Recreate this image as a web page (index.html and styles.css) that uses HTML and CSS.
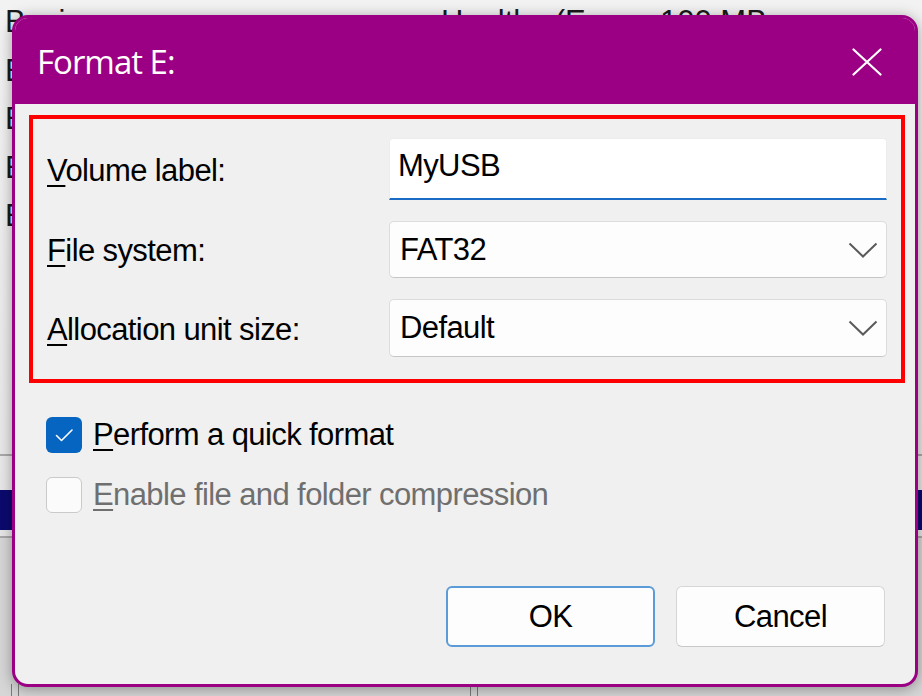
FILE: index.html
```html
<!DOCTYPE html>
<html lang="en">
<head>
<meta charset="utf-8">
<title>Format E:</title>
<link rel="stylesheet" href="styles.css">
</head>
<body>
<div class="screen">
  <div class="bg">
    <div class="bg-list">
      <div class="bg-row head"><span class="c1">Basic</span><span class="c2">Healthy (E</span><span class="c3">100 MB</span></div>
      <div class="bg-row"><span class="c1 clip">E</span></div>
      <div class="bg-row"><span class="c1 clip">E</span></div>
      <div class="bg-row"><span class="c1 clip">E</span></div>
      <div class="bg-row"><span class="c1 clip">E</span></div>
    </div>
    <div class="bg-rule"></div>
    <div class="bg-band"></div>
    <div class="bg-rule second"></div>
    <div class="bg-lower">
      <div class="bg-cell first"></div>
      <div class="bg-cell second"></div>
    </div>
  </div>

  <div class="dialog">
    <div class="titlebar">
      <span class="title">Format E:</span>
      <svg class="close" width="30" height="28" viewBox="0 0 30 28" aria-hidden="true">
        <path d="M1.5 1.5 L28.5 26.5 M28.5 1.5 L1.5 26.5" stroke="#ffffff" stroke-width="2.2" fill="none" stroke-linecap="round"/>
      </svg>
    </div>
    <div class="body">
      <div class="fields">
        <div class="label"><u>V</u>olume label:</div>
        <div class="textbox">MyUSB</div>

        <div class="label"><u>F</u>ile system:</div>
        <div class="select">
          <span>FAT32</span>
          <svg class="chev" width="30" height="16" viewBox="0 0 30 16" aria-hidden="true"><polyline points="1.5,1.5 15,14.5 28.5,1.5" stroke="#5a5a5a" stroke-width="2" fill="none"/></svg>
        </div>

        <div class="label"><u>A</u>llocation unit size:</div>
        <div class="select">
          <span>Default</span>
          <svg class="chev" width="30" height="16" viewBox="0 0 30 16" aria-hidden="true"><polyline points="1.5,1.5 15,14.5 28.5,1.5" stroke="#5a5a5a" stroke-width="2" fill="none"/></svg>
        </div>
      </div>

      <div class="opts">
        <div class="check">
          <span class="box on">
            <svg width="36" height="36" viewBox="0 0 36 36" aria-hidden="true"><polyline points="10.5,18.5 15.5,23.5 26,13" stroke="#ffffff" stroke-width="1.6" fill="none" stroke-linecap="round" stroke-linejoin="round"/></svg>
          </span>
          <span class="ctext"><u>P</u>erform a quick format</span>
        </div>
        <div class="check disabled">
          <span class="box off"></span>
          <span class="ctext"><u>E</u>nable file and folder compression</span>
        </div>
      </div>

      <div class="actions">
        <button class="btn primary">OK</button>
        <button class="btn">Cancel</button>
      </div>
    </div>
  </div>
</div>
</body>
</html>
```

FILE: styles.css
```css
html, body {
  margin: 0;
  padding: 0;
  background: #ececec;
}

.screen {
  position: relative;
  width: 922px;
  height: 696px;
  overflow: hidden;
  font-family: "Liberation Sans", Arial, sans-serif;
}

/* background window (Disk Management) */
.bg {
  display: flex;
  flex-direction: column;
  height: 696px;
  background: linear-gradient(#f2f2f2, #e2e2e2);
  color: #1a1a1a;
  font-size: 31px;
}

.bg-list {
  height: 456px;
  margin-top: -2px;
}

.bg-row {
  display: grid;
  grid-template-columns: 436px 219px auto;
  height: 48.5px;
  line-height: 48px;
  padding-left: 5px;
  white-space: nowrap;
}

.bg-row .clip {
  display: block;
  width: 7px;
  overflow: hidden;
}

.bg-rule {
  height: 2px;
  background: #a8a8a8;
}

.bg-rule.second {
  margin-top: 6px;
}

.bg-band {
  margin-top: 34px;
  height: 40px;
  background: #0b0a6e;
}

.bg-lower {
  flex: 1;
  display: flex;
  align-items: flex-end;
  background: #d6d6d6;
}

.bg-cell {
  height: 12px;
  width: 6px;
  border-left: 1.5px solid #7a7a7a;
  border-right: 1.5px solid #7a7a7a;
}

.bg-cell.first {
  margin-left: 11px;
}

.bg-cell.second {
  margin-left: 451px;
}

/* dialog */
.dialog {
  position: absolute;
  left: 12px;
  top: 15px;
  width: 906px;
  height: 672px;
  box-sizing: border-box;
  border: 3px solid #9b0084;
  border-radius: 16px;
  background: #f0f0f0;
  overflow: hidden;
  display: flex;
  flex-direction: column;
  box-shadow: 0 2px 14px rgba(0, 0, 0, 0.35);
}

.titlebar {
  flex-shrink: 0;
  height: 86px;
  background: #9b0084;
  display: flex;
  align-items: center;
  justify-content: space-between;
  padding: 0 33px 0 22px;
}

.title {
  color: #ffffff;
  font-family: "Open Sans", "Noto Sans", sans-serif;
  font-size: 33px;
  letter-spacing: -1px;
}

.close {
  display: block;
  margin-top: 2px;
}

.body {
  flex: 1;
  display: flex;
  flex-direction: column;
  padding: 11px 10px 0 14px;
  font-size: 31px;
  letter-spacing: -0.6px;
  color: #000;
}

u {
  text-decoration-thickness: 2px;
  text-underline-offset: 4px;
}

.fields {
  border: 4px solid #ff0000;
  padding: 19px 14px 22px 14px;
  display: grid;
  grid-template-columns: 342px 1fr;
  grid-template-rows: 62px 57px 58px;
  row-gap: 21px;
  align-items: center;
}

.label {
  white-space: nowrap;
  padding-top: 3px;
}

.textbox {
  height: 62px;
  box-sizing: border-box;
  background: #ffffff;
  border: 1px solid #ececec;
  border-bottom: 2px solid #1a6bc4;
  border-radius: 4px 4px 0 0;
  padding: 0 0 6px 8px;
  display: flex;
  align-items: center;
}

.select {
  height: 100%;
  box-sizing: border-box;
  background: #fdfdfd;
  border: 1px solid #dcdcdc;
  border-bottom-color: #c6c6c6;
  border-radius: 5px;
  display: flex;
  align-items: center;
  justify-content: space-between;
  padding: 0 8px 0 10px;
}

.chev {
  display: block;
}

.opts {
  margin-top: 34px;
  padding-left: 17px;
  display: flex;
  flex-direction: column;
  gap: 24px;
}

.check {
  display: flex;
  align-items: center;
  gap: 11px;
  height: 36px;
  white-space: nowrap;
}

.box {
  width: 36px;
  height: 36px;
  box-sizing: border-box;
  border-radius: 6px;
  flex-shrink: 0;
}

.box svg {
  display: block;
}

.box.on {
  background: #0565c0;
}

.box.off {
  background: #fbfbfb;
  border: 1.5px solid #cacaca;
}

.check.disabled .ctext {
  color: #6f6f6f;
}

.actions {
  margin-top: auto;
  display: flex;
  justify-content: flex-end;
  gap: 21px;
  padding: 0 20px 37px 0;
}

.btn {
  width: 209px;
  height: 61px;
  box-sizing: border-box;
  border-radius: 6px;
  background: #fdfdfd;
  border: 1px solid #d6d6d6;
  border-bottom-color: #c8c8c8;
  font-family: "Liberation Sans", Arial, sans-serif;
  font-size: 31px;
  letter-spacing: -0.6px;
  color: #000;
  padding: 0;
}

.btn.primary {
  border: 2px solid #5b9bd8;
}
```
